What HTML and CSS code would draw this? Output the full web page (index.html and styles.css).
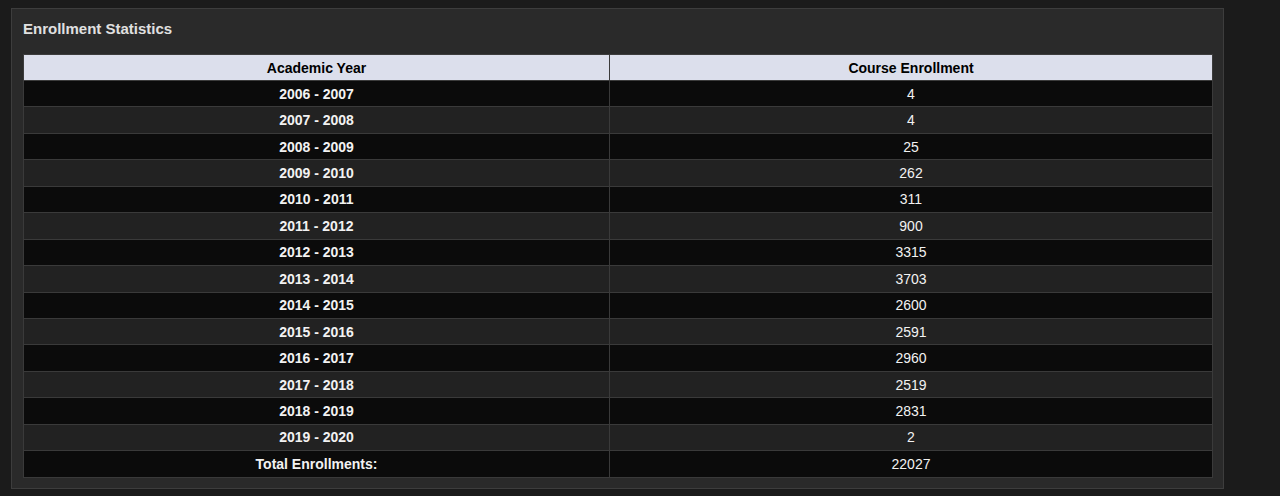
FILE: index.html
```html
<!DOCTYPE html>
<html lang="en">

  <head>
    <meta charset="UTF-8">
    <meta name="viewport" content="width=device-width, initial-scale=1.0">
    <title>Enrollment Statistics</title>
    <link rel="stylesheet" href="styles.css">
  </head>

  <body>
    <div class="panel">
      <!-- title of the box -->
      <h3 class="panel_title">Enrollment Statistics</h3>
      <table class="stats">
        <thead>
          <tr>
            <th class="col_year">Academic Year</th>
            <th>Course Enrollment</th>
          </tr>
        </thead>
        <tbody>
          <tr><td class="year">2006 - 2007</td><td>4</td></tr>
          <tr><td class="year">2007 - 2008</td><td>4</td></tr>
          <tr><td class="year">2008 - 2009</td><td>25</td></tr>
          <tr><td class="year">2009 - 2010</td><td>262</td></tr>
          <tr><td class="year">2010 - 2011</td><td>311</td></tr>
          <tr><td class="year">2011 - 2012</td><td>900</td></tr>
          <tr><td class="year">2012 - 2013</td><td>3315</td></tr>
          <tr><td class="year">2013 - 2014</td><td>3703</td></tr>
          <tr><td class="year">2014 - 2015</td><td>2600</td></tr>
          <tr><td class="year">2015 - 2016</td><td>2591</td></tr>
          <tr><td class="year">2016 - 2017</td><td>2960</td></tr>
          <tr><td class="year">2017 - 2018</td><td>2519</td></tr>
          <tr><td class="year">2018 - 2019</td><td>2831</td></tr>
          <tr><td class="year">2019 - 2020</td><td>2</td></tr>
          <!-- sum row -->
          <tr class="total"><td class="year">Total Enrollments:</td><td>22027</td></tr>
        </tbody>
      </table>
    </div>
  </body>

</html>
```

FILE: styles.css
```css
* {
  margin: 0;
  padding: 0;
  box-sizing: border-box;
}

body {
  background-color: #1b1b1b;
  font-family: "Liberation Sans", Arial, sans-serif;
  padding: 8px 0 0 11px;
}

.panel {
  width: 1213px;
  background-color: #2a2a2a;
  border: 1px solid #3d3d3d;
  padding: 11px 10px 10px 11px;
}

.panel_title {
  font-size: 15px;
  font-weight: bold;
  color: #e0e0e0;
  line-height: 18px;
  margin: 0 0 16px 0;
}

.stats {
  width: 100%;
  table-layout: fixed;
  border-collapse: collapse;
  border: 1px solid #474747;
  font-size: 14px;
}

.stats th {
  height: 26px;
  background-color: #dcdfec;
  color: #000;
  font-weight: bold;
  border: 1px solid #3c3c3c;
}

.stats th.col_year {
  width: 586px;
}

.stats td {
  height: 26.45px;
  text-align: center;
  color: #f2f2f2;
  border: 1px solid #3a3a3a;
}

.stats tbody tr:nth-child(odd) {
  background-color: #0b0b0b;
}

.stats tbody tr:nth-child(even) {
  background-color: #222222;
}

.stats td.year {
  font-weight: bold;
}
```
